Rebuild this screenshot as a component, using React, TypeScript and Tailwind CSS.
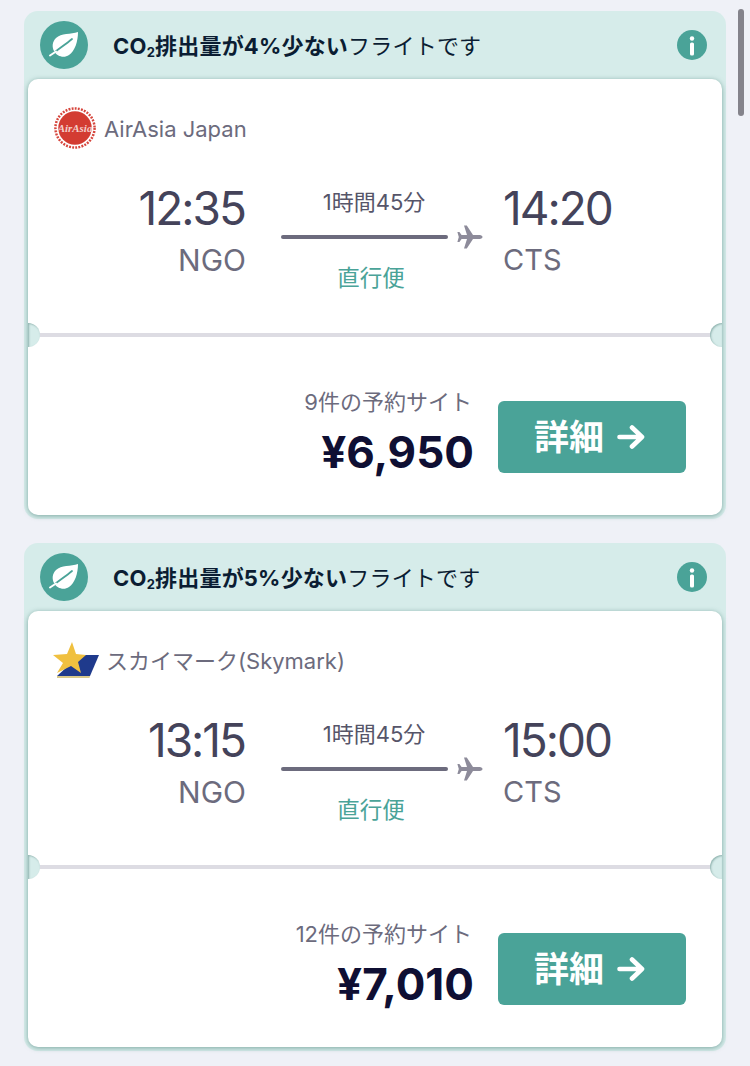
const FONT = 'font-["Inter","Noto_Sans_CJK_JP",sans-serif]';

function Leaf() {
  return (
    <svg viewBox="0 0 48 48" className="h-12 w-12 shrink-0">
      <circle cx="24" cy="24" r="24" fill="#4aa398" />
      <path d="M38 11 C31 13.5 21 12 16 17 C12 21 12 26 14 30 C17 35.5 24 37.5 29 34 C35 30 38 20 38 11 Z" fill="#ffffff" />
      <path d="M15 31 C20 27 26 23 32 18" fill="none" stroke="#4aa398" strokeWidth="1.8" strokeLinecap="round" />
      <path d="M10 34.5 L16 30.5" fill="none" stroke="#ffffff" strokeWidth="2" strokeLinecap="round" />
    </svg>
  );
}

function Info() {
  return (
    <svg viewBox="0 0 30 30" className="h-[30px] w-[30px] shrink-0">
      <circle cx="15" cy="15" r="15" fill="#4aa398" />
      <circle cx="15" cy="8.5" r="2.2" fill="#ffffff" />
      <rect x="13" y="12.5" width="4" height="13" rx="1.6" fill="#ffffff" />
    </svg>
  );
}

function Plane() {
  return (
    <svg viewBox="0 0 26 24" className="h-6 w-[26px]">
      <path
        d="M25.5 12 C25.5 10.6 23.6 10 21.5 10 L16 10 L9.8 0.5 L7 0.5 L10 10 L4.6 10 L2.4 7 L0.4 7 L1.8 12 L0.4 17 L2.4 17 L4.6 14 L10 14 L7 23.5 L9.8 23.5 L16 14 L21.5 14 C23.6 14 25.5 13.4 25.5 12 Z"
        fill="#8d8b9a"
      />
    </svg>
  );
}

function Arrow() {
  return (
    <svg viewBox="0 0 28 24" className="h-6 w-7">
      <path d="M2.5 12 H25 M15 2.5 L25 12 L15 21.5" fill="none" stroke="#ffffff" strokeWidth="4.6" strokeLinecap="round" strokeLinejoin="round" />
    </svg>
  );
}

function AirAsiaLogo() {
  return (
    <svg viewBox="0 0 44 44" className="h-[42px] w-[42px] shrink-0">
      <circle cx="22" cy="22" r="20.5" fill="none" stroke="#d6453c" strokeWidth="2.6" strokeDasharray="2 1.3" />
      <circle cx="22" cy="22" r="17.5" fill="#d33c32" />
      <text x="22" y="26" textAnchor="middle" fontSize="11.5" fontStyle="italic" fontWeight="700" fill="#f3cfca" fontFamily="Liberation Serif, serif">AirAsia</text>
    </svg>
  );
}

function SkymarkLogo() {
  return (
    <svg viewBox="0 0 48 38" className="h-[38px] w-12 shrink-0">
      <path d="M28 14 L47 14 L38 35 L5 35 Z" fill="#1f3a8c" />
      <path d="M5 35 L38 35 L37.5 37 L5 37 Z" fill="#d9c98a" />
      <path d="M20 1 L24 13 L34 14 L26 21 L29 32 L19 25 L5 32 L11 22 L1 14 L15 13 Z" fill="#f0c03f" />
    </svg>
  );
}

function Notch({ side }: { side: "left" | "right" }) {
  return side === "left" ? (
    <div className="absolute left-0 top-[244px] h-6 w-3 rounded-r-full bg-[#d6ecea] shadow-[inset_1px_1px_2px_rgba(60,110,105,0.45)]" />
  ) : (
    <div className="absolute right-0 top-[244px] h-6 w-3 rounded-l-full bg-[#d6ecea] shadow-[inset_1px_1px_2px_rgba(60,110,105,0.45)]" />
  );
}

type Flight = {
  pct: string;
  logo: React.ReactNode;
  airline: string;
  gap: string;
  dep: string;
  arr: string;
  sites: string;
  price: string;
};

function Card({ f }: { f: Flight }) {
  return (
    <div className="rounded-[14px] bg-[#d6ecea] px-1 pb-1">
      <div className="flex h-[68px] items-center px-3">
        <Leaf />
        <div className="ml-[25px] flex-1 pt-[2px] text-[22px] leading-[28px] tracking-[0.2px] text-[#0b1d33]">
          <span className="font-bold">
            CO<sub className="text-[13px] leading-none">2</sub>排出量が{f.pct}少ない
          </span>
          <span>フライトです</span>
        </div>
        <div className="mr-[3px]">
          <Info />
        </div>
      </div>
      <div className="relative h-[436px] rounded-[10px] bg-white shadow-[0_1px_5px_rgba(50,110,100,0.55)]">
        <div className={`flex h-[98px] items-center ${f.gap}`}>
          {f.logo}
          <span className="pt-[3px] text-[22px] text-[#6c6b7d]">{f.airline}</span>
        </div>
        <div className="flex h-[156px] items-start">
          <div className="flex-1 text-right">
            <div className="mt-1 pr-px text-[46px] leading-[54px] tracking-[-2px] text-[#44435a]">{f.dep}</div>
            <div className="mt-[7px] text-[30px] leading-[36px] text-[#6c6b7d]">NGO</div>
          </div>
          <div className="flex w-[258px] flex-col items-center">
            <div className="mt-[11px] -translate-x-px text-[22px] leading-[28px] text-[#565569]">1時間45分</div>
            <div className="mt-[9px] flex items-center gap-[9px] self-stretch pl-[35px]">
              <div className="h-1 w-[167px] rounded-full bg-[#6c6b7d]" />
              <Plane />
            </div>
            <div className="mt-[14px] -translate-x-[4px] text-[22.5px] leading-[30px] text-[#4aa398]">直行便</div>
          </div>
          <div className="flex-1 text-left">
            <div className="mt-1 -ml-px text-[46px] leading-[54px] tracking-[-2px] text-[#44435a]">{f.arr}</div>
            <div className="mt-[7px] -ml-px text-[29px] leading-[36px] text-[#6c6b7d]">CTS</div>
          </div>
        </div>
        <div className="h-1 bg-[#dddce3]" />
        <Notch side="left" />
        <Notch side="right" />
        <div className="mt-[51px] flex items-start justify-end gap-[24px] pr-9">
          <div className="text-right">
            <div className="pr-[2px] text-[22px] leading-[28px] text-[#6c6b7d]">{f.sites}</div>
            <div className="mt-[10px] text-[44px] font-bold leading-[52px] text-[#0f0f33]">{f.price}</div>
          </div>
          <div className="mt-[13px] flex h-[72px] w-[188px] items-center justify-center gap-[13px] rounded-[6px] bg-[#4aa398] pr-[5px] text-[35px] font-bold text-white">
            詳細
            <Arrow />
          </div>
        </div>
      </div>
    </div>
  );
}

const flights: Flight[] = [
  { pct: "4%", logo: <AirAsiaLogo />, airline: "AirAsia Japan", gap: "gap-[8px] pl-[26px]", dep: "12:35", arr: "14:20", sites: "9件の予約サイト", price: "¥6,950" },
  { pct: "5%", logo: <SkymarkLogo />, airline: "スカイマーク(Skymark)", gap: "gap-[6px] pl-6", dep: "13:15", arr: "15:00", sites: "12件の予約サイト", price: "¥7,010" },
];

export default function App() {
  return (
    <div className={`relative h-[1066px] w-[750px] overflow-hidden bg-[#eff1f7] ${FONT}`}>
      <div className="flex flex-col gap-6 pl-6 pr-6 pt-[11px]">
        {flights.map((f) => (
          <Card key={f.dep} f={f} />
        ))}
      </div>
      <div className="absolute right-[6px] top-[9px] h-[107px] w-[6px] rounded-full bg-[#84838b]" />
    </div>
  );
}
